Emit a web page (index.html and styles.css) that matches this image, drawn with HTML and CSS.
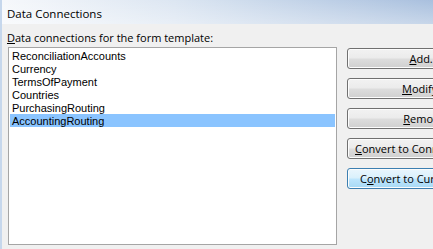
FILE: index.html
```html
<!DOCTYPE html>
<html>
<head>
<meta charset="utf-8">
<link rel="stylesheet" href="styles.css">
</head>
<body>
<div class="dialog">
  <div class="titlebar"><span class="title">Data Connections</span></div>
  <div class="content">
    <div class="label"><u>D</u>ata connections for the form template:</div>
    <div class="main">
      <div class="listbox">
        <div class="item">ReconciliationAccounts</div>
        <div class="item">Currency</div>
        <div class="item">TermsOfPayment</div>
        <div class="item">Countries</div>
        <div class="item">PurchasingRouting</div>
        <div class="item selected">AccountingRouting</div>
      </div>
      <div class="buttons">
        <div class="btn"><u>A</u>dd...</div>
        <div class="btn"><u>M</u>odify...</div>
        <div class="btn"><u>R</u>emove</div>
        <div class="btn btn-left"><u>C</u>onvert to Connection File...</div>
        <div class="btn btn-left btn-focus">C<u>o</u>nvert to Current...</div>
      </div>
    </div>
  </div>
</div>
</body>
</html>
```

FILE: styles.css
```css
html, body {
  margin: 0;
  padding: 0;
  width: 433px;
  height: 249px;
  overflow: hidden;
  background: #f0f0f0;
  font-family: "Open Sans", "Liberation Sans", sans-serif;
  font-size: 11px;
  color: #000;
}
.dialog {
  height: 249px;
  border-left: 2px solid #c6d7ec;
  box-sizing: border-box;
}
.titlebar {
  height: 24px;
  background: linear-gradient(to bottom, rgba(255,255,255,0) 0%, rgba(255,255,255,0.35) 100%),
              linear-gradient(to right, #f6f8fb 0%, #dce6f2 40%, #a9c0de 100%);
  display: flex;
  align-items: center;
  padding-left: 5px;
  padding-top: 2px;
  box-sizing: border-box;
}
.title {
  font-size: 11.5px;
  color: #000;
}
.content {
  padding: 6px 0 0 5px;
}
.label {
  height: 15px;
  line-height: 15px;
}
.label u, .btn u {
  text-decoration: underline;
  text-underline-offset: 1px;
}
.main {
  display: flex;
  margin-top: 2px;
}
.listbox {
  flex: 0 0 329px;
  height: 198px;
  margin-left: 1px;
  background: #fff;
  border: 1px solid #a5a5a5;
  padding: 1px 1px;
  box-sizing: border-box;
  font-family: "Liberation Sans", sans-serif;
  font-size: 11px;
}
.item {
  height: 13px;
  line-height: 14px;
  padding-left: 2px;
  white-space: nowrap;
}
.item.selected {
  background: #8ac4ff;
}
.buttons {
  flex: 0 0 auto;
  margin-left: 10px;
  margin-top: 1px;
  display: flex;
  flex-direction: column;
  gap: 9px;
}
.btn {
  width: 154px;
  height: 21px;
  box-sizing: border-box;
  border: 1px solid #707070;
  border-radius: 3px;
  background: linear-gradient(to bottom, #f2f2f2 0%, #ebebeb 48%, #dddddd 52%, #cfcfcf 100%);
  display: flex;
  align-items: center;
  justify-content: center;
  white-space: nowrap;
  box-shadow: inset 0 0 0 1px #fcfcfc;
}
.btn-left {
  width: 170px;
  justify-content: flex-start;
  padding-left: 7px;
}
.btn-focus {
  border-color: #3c7fb1;
  background: linear-gradient(to bottom, #eaf6fd 0%, #d9f0fc 48%, #bee6fd 52%, #a7d9f5 100%);
  padding-left: 12px;
}
```
